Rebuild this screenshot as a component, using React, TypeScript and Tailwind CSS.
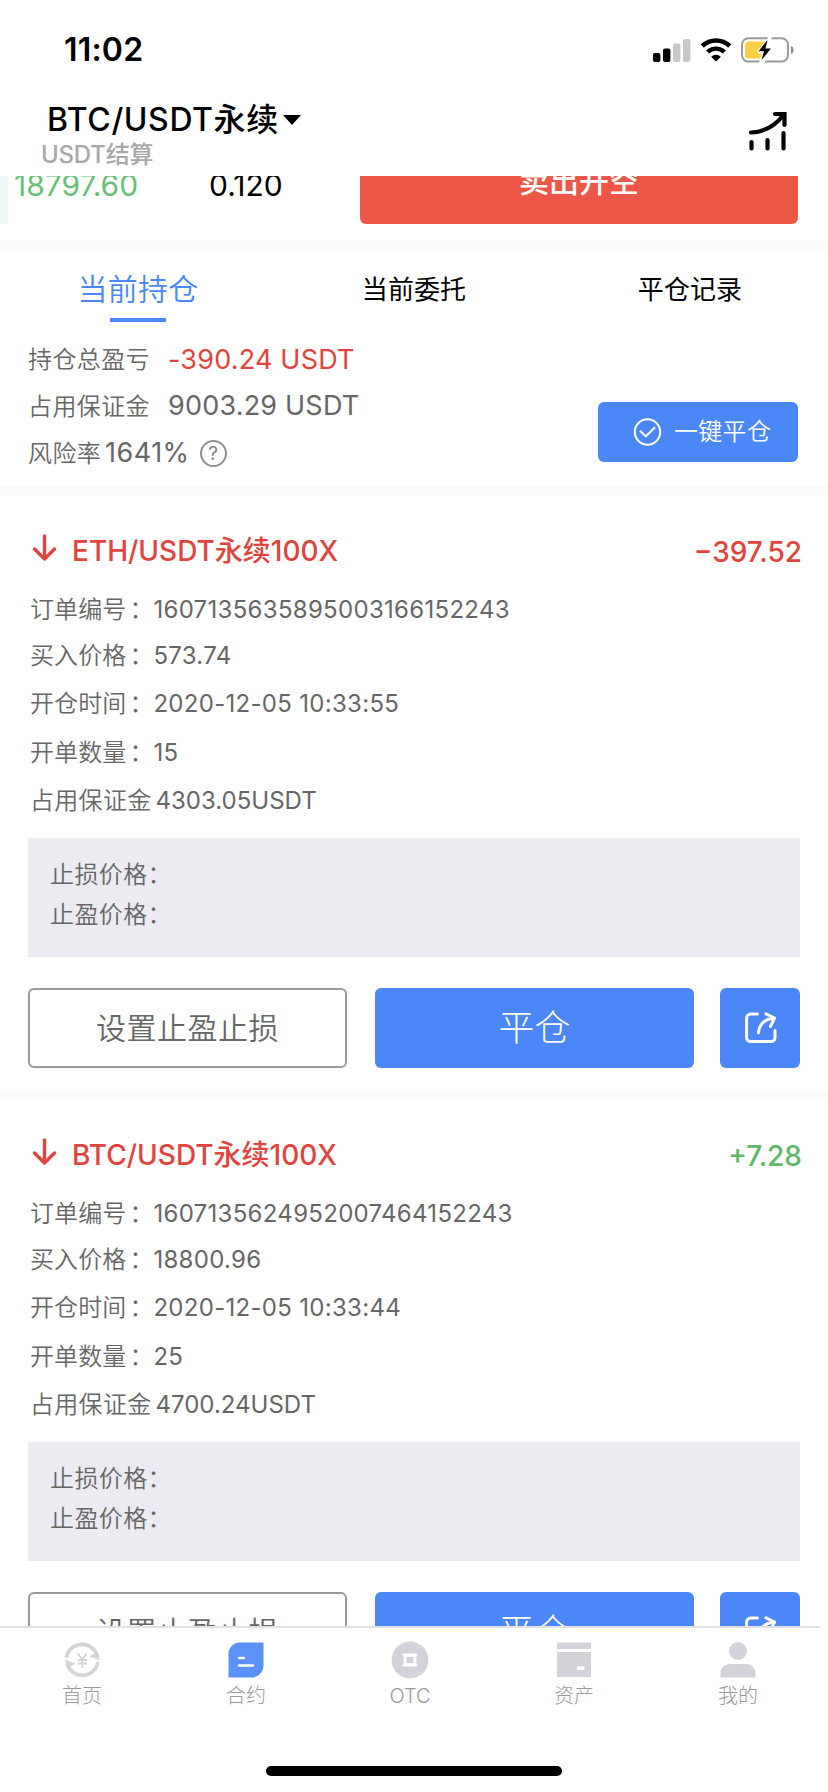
import type { ReactNode } from 'react';

interface Position {
    pair: string;
    profit: string;
    up: boolean;
    orderNo: string;
    price: string;
    time: string;
    amount: string;
    margin: string;
}

const positions: Position[] = [
    {
        pair: 'ETH/USDT永续100X',
        profit: '−397.52',
        up: false,
        orderNo: '1607135635895003166152243',
        price: '573.74',
        time: '2020-12-05 10:33:55',
        amount: '15',
        margin: '4303.05USDT',
    },
    {
        pair: 'BTC/USDT永续100X',
        profit: '+7.28',
        up: true,
        orderNo: '1607135624952007464152243',
        price: '18800.96',
        time: '2020-12-05 10:33:44',
        amount: '25',
        margin: '4700.24USDT',
    },
];

function StatusBar() {
    return (
        <div className="flex h-[99px] items-center justify-between pl-[64px] pr-[33px]">
            <span className="text-[32px] font-semibold leading-none tracking-[0.2px]">11:02</span>
            <div className="flex items-center">
                <svg width="38" height="24" viewBox="0 0 38 24">
                    <rect x="0" y="15" width="7.4" height="9" rx="2" fill="#000" />
                    <rect x="10" y="10.5" width="7.4" height="13.5" rx="2" fill="#000" />
                    <rect x="20" y="5.5" width="7.4" height="18.5" rx="2" fill="#c8c8c8" />
                    <rect x="30" y="1" width="7.4" height="23" rx="2" fill="#c8c8c8" />
                </svg>
                <svg className="ml-[9px]" width="32" height="24" viewBox="0 0 32 24">
                    <path d="M2.200 8a20 20 0 0 1 27.600 0" fill="none" stroke="#000" strokeWidth="4.600" />
                    <path d="M7.600 14a12.200 12.200 0 0 1 16.800 0" fill="none" stroke="#000" strokeWidth="4.400" />
                    <path d="M16 23.600l-4.900-4.900a7 7 0 0 1 9.800 0z" fill="#000" />
                </svg>
                <svg className="ml-[9px]" width="54" height="26" viewBox="0 0 54 26">
                    <rect x="1" y="1.200" width="46" height="23.400" rx="6.500" fill="none" stroke="#9b9b9b" strokeWidth="2" />
                    <path d="M7.500 4.500h18L17 17h6l-1.500 4.500h-14a3.500 3.500 0 0 1-3.500-3.500v-10a3.500 3.500 0 0 1 3.500-3.500z" fill="#f8cf47" />
                    <path d="M27.500 0L15.500 14.800h6L18 26h5L33 10.800h-6L31 0z" fill="#fff" />
                    <path d="M26.500 3L17.500 14.200h5.500L20.500 23 30 11.600h-5.500z" fill="#000" />
                    <path d="M50 9c3.400.8 3.400 7.200 0 8z" fill="#8a8a8a" />
                </svg>
            </div>
        </div>
    );
}

function Header() {
    return (
        <div className="flex h-[77px] justify-between pl-[41px] pr-[41px]">
            <div>
                <div className="flex h-[42px] items-center pl-[6px]">
                    <span className="text-[32px] font-medium leading-none tracking-[0.6px]">BTC/USDT永续</span>
                    <svg className="ml-[4px]" width="18" height="10" viewBox="0 0 18 10">
                        <path d="M0 0h18l-9 10z" fill="#000" />
                    </svg>
                </div>
                <div className="flex h-[28px] items-center text-[24px] font-medium leading-none tracking-[-0.2px] text-[#a8a8a8]">USDT结算</div>
            </div>
            <svg className="mt-[12px]" width="38" height="40" viewBox="0 0 38 40" fill="none" stroke="#000" strokeLinecap="round" strokeWidth="4.200">
                <path d="M2 21.500C16 21 26 15 34.500 4" />
                <path d="M26 3h9.500V14" />
                <path d="M2.500 31v6.500M18.500 29v8.500M34.500 22v15.500" />
            </svg>
        </div>
    );
}

// bottom edge of the order book, scrolled under the header
function OrderBookTail() {
    return (
        <div className="flex h-[64px] items-start overflow-hidden pr-[30px]">
            <div className="h-[48px] w-[8px] bg-[#ebf8f5]" />
            <div className="-mt-[8px] ml-[6px] w-[195px] text-[30px] leading-[34px] text-[#68bf78]">18797.60</div>
            <div className="-mt-[8px] w-[151px] text-[30px] leading-[34px] text-black">0.120</div>
            <div className="-mt-[38px] flex h-[86px] flex-1 items-center justify-center rounded-[6px] bg-[#ed5747] text-[30px] font-medium leading-none text-white">
                卖出开空
            </div>
        </div>
    );
}

function Tabs() {
    return (
        <div className="grid h-[74px] grid-cols-3 border-t-[12px] border-[#fcfcfc] box-content text-center">
            <div className="flex flex-col items-center text-[30px] font-[350] leading-[75px] tracking-[0.3px] text-[#4b87f6]">
                <span className="h-[66px]">当前持仓</span>
                <span className="h-[4px] w-[56px] bg-[#4b87f6]" />
            </div>
            <div className="text-[26px] leading-[75px] tracking-[0.1px]">当前委托</div>
            <div className="text-[26px] leading-[75px] tracking-[0.1px]">平仓记录</div>
        </div>
    );
}

function Summary() {
    return (
        <div className="flex h-[160px] justify-between border-b-[9px] border-[#fbfbfb] box-content pl-[28px] pr-[30px] text-[#666]">
            <div className="pt-[11px]">
                <div className="flex h-[46px] items-center">
                    <span className="w-[140px] text-[24px] font-[350] tracking-[0.4px]">持仓总盈亏</span>
                    <span className="text-[27px] tracking-[0.2px] text-[#e0443e]">-390.24 USDT</span>
                </div>
                <div className="flex h-[47px] items-center">
                    <span className="w-[140px] text-[24px] font-[350] tracking-[0.4px]">占用保证金</span>
                    <span className="text-[27px] tracking-[0.2px]">9003.29 USDT</span>
                </div>
                <div className="flex h-[47px] items-center">
                    <span className="w-[77px] text-[24px] font-[350] tracking-[0.4px]">风险率</span>
                    <span className="text-[27px] tracking-[0.5px]">1641%</span>
                    <span className="ml-[10px] flex h-[27px] w-[27px] items-center justify-center rounded-full border-2 border-[#8f8f8f] text-[19px] leading-none text-[#808080]">?</span>
                </div>
            </div>
            <button className="mt-[76px] flex h-[60px] w-[200px] items-center rounded-[6px] bg-[#4b87f6] pl-[35px] text-[24px] font-[350] tracking-[0.3px] text-white">
                <svg className="mr-[12px]" width="29" height="29" viewBox="0 0 29 29" fill="none" stroke="#fff" strokeWidth="2" strokeLinecap="round">
                    <circle cx="14.500" cy="14" r="12.700" />
                    <path d="M7.500 13.300l5.300 5 8.700-8.500" />
                </svg>
                一键平仓
            </button>
        </div>
    );
}

function Row({ label, value, className }: { label: string; value: string; className: string }) {
    return (
        <div className={`flex items-center pl-[30px] text-[24px] text-[#666] ${className}`}>
            <span className="font-[350] tracking-[0.1px]">{label}</span>
            <span className="ml-[3px] w-[24px] font-[350]">：</span>
            <span className="tracking-[0.3px]">{value}</span>
        </div>
    );
}

function ShareIcon() {
    return (
        <svg className="ml-[2px]" width="32" height="32" viewBox="0 0 32 32" fill="none" stroke="#fff" strokeWidth="3" strokeLinecap="round" strokeLinejoin="round">
            <path d="M12.500 2H5.500A4 4 0 0 0 1.600 6v19.500a4 4 0 0 0 4 4H26a4 4 0 0 0 4-4V18.500" />
            <path d="M13.500 21C14 12.500 20 6.500 29 6.500" />
            <path d="M21 1.800L29.500 6 25.500 14.500" />
        </svg>
    );
}

function PositionCard({ position }: { position: Position }) {
    return (
        <div className="h-[596px] shrink-0 border-b-[8px] border-[#fbfbfb] box-content">
            <div className="flex h-[112px] items-center justify-between pl-[32px] pr-[26px] text-[28px] font-medium">
                <div className="flex items-center text-[#e0443e]">
                    <svg className="-mt-[6px] mr-[15px]" width="25" height="28" viewBox="0 0 25 28" fill="none" stroke="#e0443e" strokeWidth="3.400" strokeLinecap="round" strokeLinejoin="round">
                        <path d="M12.500 2v23M2.500 15l10 10 10-10" />
                    </svg>
                    <span className="text-[28px]">{position.pair}</span>
                </div>
                <span className={position.up ? 'pt-[2px] text-[#5fb868]' : 'pt-[2px] text-[#e0443e]'}>{position.profit}</span>
            </div>
            <Row className="-mt-[19px] h-[44px]" label="订单编号" value={position.orderNo} />
            <Row className="h-[48px]" label="买入价格" value={position.price} />
            <Row className="h-[48px]" label="开仓时间" value={position.time} />
            <Row className="h-[50px]" label="开单数量" value={position.amount} />
            <div className="flex h-[46px] items-center pl-[30px] text-[24px] text-[#666]">
                <span className="font-[350] tracking-[0.3px]">占用保证金</span>
                <span className="ml-[4px]">{position.margin}</span>
            </div>
            <div className="mx-[28px] mt-[14px] h-[119px] bg-[#ebebf1] pl-[22px] pt-[17px] text-[24px] font-[350] leading-[40px] tracking-[0.4px] text-[#666]">
                <div>止损价格：</div>
                <div>止盈价格：</div>
            </div>
            <div className="mx-[28px] mt-[31px] flex h-[80px]">
                <button className="w-[319px] rounded-[6px] border-2 border-[#999] text-[30px] font-[350] tracking-[0.5px] text-[#666]">设置止盈止损</button>
                <button className="ml-[28px] w-[319px] rounded-[6px] bg-[#4b87f6] text-[36px] font-light text-white">平仓</button>
                <button className="ml-auto flex w-[80px] items-center justify-center rounded-[6px] bg-[#4b87f6]">
                    <ShareIcon />
                </button>
            </div>
        </div>
    );
}

function NavItem({ label, children }: { label: string; children: ReactNode }) {
    return (
        <div className="flex w-[164px] flex-col items-center pt-[13px] text-[#999]">
            <svg width="38" height="38" viewBox="0 0 38 38">{children}</svg>
            <span className="mt-[2px] text-[20px] font-light leading-[30px]">{label}</span>
        </div>
    );
}

function BottomNav() {
    return (
        <div className="h-[166px] bg-white">
            <div className="flex h-[140px] w-[820px] border-t-2 border-[#e2e2e4]">
                <NavItem label="首页">
                    <path d="M3.500 16.500A15.700 15.700 0 0 1 34.500 16.500" fill="none" stroke="#d3d3da" strokeWidth="3.800" />
                    <path d="M34.900 21A15.700 15.700 0 0 1 4 22" fill="none" stroke="#d3d3da" strokeWidth="3.800" />
                    <path d="M37 19.200L26 15.200l7-3.200zM1.800 18.500l11 4.200L5 26z" fill="#d3d3da" />
                    <path d="M14.800 12.500l4.400 6 4.400-6M19.200 18.500v8M14.500 19h9.400M14.500 22.500h9.400" fill="none" stroke="#d3d3da" strokeWidth="1.800" />
                </NavItem>
                <NavItem label="合约">
                    <path d="M13 1.500h23.500v23a12 12 0 0 1-12 12H1.500V13A11.500 11.500 0 0 1 13 1.500z" fill="#5a92f7" />
                    <path d="M12 17h5M12 24.500h14" stroke="#fff" strokeWidth="2.600" strokeLinecap="round" />
                </NavItem>
                <NavItem label="OTC">
                    <circle cx="19" cy="19" r="18.500" fill="#d3d3da" />
                    <path d="M11.500 12.500h15v2h-1v9h1v2h-15v-2h1v-9h-1z" fill="#fff" />
                    <rect x="15.500" y="16" width="7" height="6" fill="#d3d3da" />
                </NavItem>
                <NavItem label="资产">
                    <path d="M2 1.500h34V8H2zM2 11h34v25H2z" fill="#d3d3da" />
                    <rect x="22" y="25.500" width="7.500" height="3.500" fill="#fff" />
                </NavItem>
                <NavItem label="我的">
                    <circle cx="19" cy="10" r="9" fill="#d3d3da" />
                    <path d="M1.500 36.500V32a9 9 0 0 1 9-9h17a9 9 0 0 1 9 9v4.500z" fill="#d3d3da" />
                </NavItem>
            </div>
            <div className="mx-auto h-[10px] w-[296px] rounded-full bg-black" />
        </div>
    );
}

export default function App() {
    return (
        <div className="flex h-[1792px] w-[828px] flex-col overflow-hidden bg-white font-['Inter','Noto_Sans_CJK_SC',sans-serif] text-black" lang="zh-CN">
            <StatusBar />
            <Header />
            <OrderBookTail />
            <Tabs />
            <Summary />
            <div className="flex h-[1131px] flex-col overflow-hidden">
                {positions.map((position) => (
                    <PositionCard key={position.orderNo} position={position} />
                ))}
            </div>
            <BottomNav />
        </div>
    );
}
